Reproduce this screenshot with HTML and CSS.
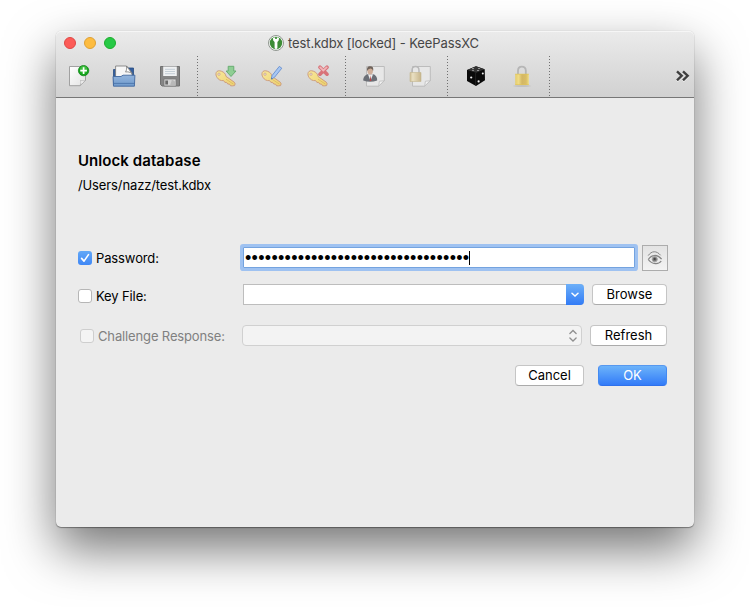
FILE: index.html
```html
<!DOCTYPE html>
<html lang="en">
<head>
<meta charset="utf-8">
<title>test.kdbx [locked] - KeePassXC</title>
<link rel="stylesheet" href="styles.css">
</head>
<body>
<svg width="0" height="0" class="defs">
  <defs>
    <linearGradient id="gold" x1="0" y1="0" x2="1" y2="1"><stop offset="0" stop-color="#f8e89a"/><stop offset="1" stop-color="#ecd070"/></linearGradient>
    <linearGradient id="paper" x1="0" y1="0" x2="1" y2="1"><stop offset="0" stop-color="#fff"/><stop offset="1" stop-color="#e2e2e2"/></linearGradient>
    <linearGradient id="folder" x1="0" y1="0" x2="0" y2="1"><stop offset="0" stop-color="#93b4dc"/><stop offset="1" stop-color="#6f9acc"/></linearGradient>
    <linearGradient id="brass" x1="0" y1="0" x2="1" y2="0"><stop offset="0" stop-color="#e5cd6c"/><stop offset=".25" stop-color="#f0dc86"/><stop offset=".5" stop-color="#d3b765"/><stop offset=".8" stop-color="#d9bd66"/><stop offset="1" stop-color="#efdc7d"/></linearGradient>
    <linearGradient id="pale" x1="0" y1="0" x2="1" y2="0"><stop offset="0" stop-color="#cfbf96"/><stop offset=".25" stop-color="#e9dfc2"/><stop offset="1" stop-color="#c7b58b"/></linearGradient>
    <g id="key">
      <path d="M1.2 7.6C2 5.6 4.2 5.4 6.4 6.2C9 7.2 10.6 8.6 11 11.4L19.3 17.2Q20.8 18.6 19.6 20.6Q17.4 21 15.6 20.8L14.4 19L12.8 19.1L11.6 17.4L9.9 17.4L8.6 15.6C5.6 16 3.4 14.6 2 12.4C1 10.8.6 9.2 1.2 7.6Z" fill="url(#gold)" stroke="#c9967a" stroke-width=".9"/>
      <circle cx="4" cy="9.2" r="1.2" fill="#e4dfd8" stroke="#c9967a" stroke-width=".6"/>
      <path d="M11 14.2L18.3 19" stroke="#d9b35c" stroke-width=".7"/>
    </g>
  </defs>
</svg>
<main class="window">
  <header class="chrome">
    <div class="titlebar">
      <div class="lights"><i class="light red"></i><i class="light yellow"></i><i class="light green"></i></div>
      <svg class="logo" width="16" height="16" viewBox="0 0 16 16"><circle cx="8" cy="8" r="7.5" fill="#fafafa" stroke="#858b85" stroke-width=".9"/><circle cx="8" cy="8" r="6.2" fill="#3c8c36"/><path d="M5 2.9L7.1 2.2L7.2 4H8.8L8.9 2.2L11 2.9L10.7 5.6L9.4 7V13.2L8 14.2L6.6 13.2V7L5.2 5.6Z" fill="#fff"/></svg>
      <span class="caption">test.kdbx [locked] - KeePassXC</span>
    </div>
    <nav class="toolbar">
      <div class="group first">
        <svg width="22" height="22" viewBox="0 0 22 22"><path d="M1.5 1.5H17.5V15.5L12 20.7H1.5Z" fill="url(#paper)" stroke="#999" stroke-width=".9"/><path d="M12 20.5C13.2 18.5 12.8 16.5 12.5 15.3C14 16 16 16 17.5 15.5Z" fill="#f9f9f9" stroke="#aaa" stroke-width=".7"/><circle cx="15.6" cy="5.6" r="5.2" fill="#15a51d" stroke="#087e10" stroke-width=".7"/><circle cx="15.6" cy="4.5" r="3.6" fill="#59cc54" opacity=".6"/><path d="M15.6 2.3V8.9M12.3 5.6H18.9" stroke="#fff" stroke-width="1.7"/></svg>
        <svg width="24" height="22" viewBox="0 0 24 22"><path d="M1.5 20V4.5H5L7 3H21.5V20Z" fill="#355f9e" stroke="#284d82" stroke-width=".8"/><path d="M3.6 1H14.5L20 8V13H3.6Z" fill="#f6f6f6" stroke="#777" stroke-width=".8"/><path d="M14.5 1C15 4 14.2 6 13.5 7C16 6.6 18 7 20 8.5Z" fill="#fff" stroke="#777" stroke-width=".8"/><path d="M1 11.5H9L11 10.2H22.9L22.4 21.2H1.5Z" fill="url(#folder)" stroke="#41689f" stroke-width=".9"/><path d="M1.7 18.4H22.2" stroke="#4974aa" stroke-width=".9"/></svg>
        <svg width="22" height="22" viewBox="0 0 22 22"><path d="M1.5 1.5H20.5V21H3L1.5 19.5Z" fill="#858585" stroke="#707070"/><path d="M4.2 1.5H17.8V11H4.2Z" fill="#eff1f2"/><path d="M6 4.3H16M6 6.5H16M6 8.7H16" stroke="#c0cbd3" stroke-width=".9"/><path d="M5 14H17V21H5Z" fill="#d2d2d2" stroke="#777" stroke-width=".7"/><path d="M6.3 15.5H9V19.5H6.3Z" fill="#686868"/><path d="M13 14.5L16.6 17V20.5H11Z" fill="#b8b8b8"/></svg>
      </div>
      <div class="group keys">
        <svg width="22" height="22" viewBox="0 0 22 22"><use href="#key"/><path d="M13.2 1.3H18.8V6H21L16 11.5L11.1 6H13.2Z" fill="#8fce94" stroke="#62a96c" stroke-width=".9"/></svg>
        <svg width="22" height="22" viewBox="0 0 22 22"><use href="#key"/><path d="M10.3 14.2L11 10.6L18.3 1.4L20.8 3.2L13.5 12.3Z" fill="#a7c7f3" stroke="#668fd0" stroke-width=".9"/><path d="M10.2 14.3L10.5 12.5L11.6 13.4Z" fill="#57698b"/></svg>
        <svg width="22" height="22" viewBox="0 0 22 22"><use href="#key"/><path d="M13 2.2L20 9.2M20 2.2L13 9.2" stroke="#d87379" stroke-width="3.6" stroke-linecap="round"/><path d="M13.2 2.4L16.3 5.4L19.7 2.4" fill="none" stroke="#f0b6ba" stroke-width="1.8" stroke-linecap="round"/></svg>
      </div>
      <div class="group entries">
        <svg width="22" height="22" viewBox="0 0 22 22"><path d="M3.5 1.5H21.3V15.8L15.7 21.2H3.5Z" fill="#e7e7e7" stroke="#bcbcbc"/><path d="M15.7 21L16.4 16.2L21.2 15.8Z" fill="#f2f2f2" stroke="#bcbcbc" stroke-width=".8"/><path d="M.2 15.5C.3 11.3 2.7 9.7 5.5 9H9.5C12.7 9.5 14.3 12 14.2 15.5Q7 18.2.2 15.5Z" fill="#6b6f76"/><path d="M5 9.3L7.5 16L10 9.3Z" fill="#eee"/><path d="M7.5 10.3L6.7 15.9H8.4Z" fill="#b94849"/><ellipse cx="7.2" cy="5.6" rx="2.8" ry="3.9" fill="#cfae99"/><path d="M4.2 6C3.7 2.5 4.7 1.3 7.3 1.3C10 1.3 10.7 3 10.1 6Q9.5 3.7 7.7 3.5Q5 3.4 4.2 6Z" fill="#6e625a"/></svg>
        <svg width="22" height="22" viewBox="0 0 22 22"><path d="M3.5 1.5H21.3V15.8L15.7 21.2H3.5Z" fill="#e7e7e7" stroke="#bcbcbc"/><path d="M15.7 21L16.4 16.2L21.2 15.8Z" fill="#f2f2f2" stroke="#bcbcbc" stroke-width=".8"/><path d="M3 8V5.5C3 .2 10 .2 10 5.5V8" fill="none" stroke="#b8b8b8" stroke-width="1.5"/><path d="M1 7.5H12V16.5H1Z" fill="url(#pale)" stroke="#c5b78f" stroke-width=".6"/></svg>
      </div>
      <div class="group tools">
        <svg width="22" height="22" viewBox="0 0 22 22"><path d="M11 1.2L19.7 4.2L20 15.2L11 21L2 16V5Z" fill="#0a0a0a"/><path d="M11 1.2L19.5 4.3L11.2 7.7L2.3 5Z" fill="#333"/><path d="M10.6 8V20.6" stroke="#2c2c2c" stroke-width=".7"/><g fill="#eee"><g opacity=".6"><ellipse cx="8" cy="3.6" rx="1.2" ry=".5"/><ellipse cx="14" cy="3.5" rx="1.2" ry=".5"/><ellipse cx="8" cy="5.3" rx="1.2" ry=".5"/><ellipse cx="13" cy="5.5" rx="1.2" ry=".5"/></g><circle cx="6.2" cy="12.5" r="1.1"/><circle cx="13.6" cy="16.4" r="1.1"/><circle cx="17.8" cy="8.6" r="1"/></g></svg>
        <svg width="22" height="22" viewBox="0 0 22 22"><ellipse cx="11" cy="21" rx="9" ry=".8" fill="#aaa" opacity=".6"/><path d="M7 10V5.5C7 .2 14.8 .2 14.8 5.5V10" fill="none" stroke="#b6b6b6" stroke-width="1.8"/><path d="M4.2 9H17.8V20H4.2Z" fill="url(#brass)"/><path d="M4.2 9.2H17.8M4.2 19.6H17.8" stroke="#e0c35a" stroke-width=".7"/></svg>
      </div>
      <svg class="more" width="14" height="12" viewBox="0 0 14 12"><path d="M1 1.3L5.7 5.8L1 10.3M7 1.3L11.7 5.8L7 10.3" fill="none" stroke="#fff" stroke-width="2" transform="translate(0 1)"/><path d="M1 1.3L5.7 5.8L1 10.3M7 1.3L11.7 5.8L7 10.3" fill="none" stroke="#3f3f3f" stroke-width="2.4"/></svg>
    </nav>
  </header>
  <section class="content">
    <h1>Unlock database</h1>
    <p class="path">/Users/nazz/test.kdbx</p>
    <form class="form">
      <div class="row password">
        <label><span class="check on"><svg width="14" height="14" viewBox="0 0 14 14"><path d="M3.6 7.4L6 10.1L10.5 3.6" fill="none" stroke="#fff" stroke-width="1.6" stroke-linecap="round" stroke-linejoin="round"/></svg></span>Password:</label>
        <div class="secret"><span class="dots">••••••••••••••••••••••••••••••••••</span><i class="caret"></i></div>
        <span class="eye"><svg width="16" height="16" viewBox="0 0 16 16" fill="none" stroke="#858585"><path d="M1.2 5.6C4.5.6 9.7.5 13.6 5.3" stroke-width="1"/><path d="M1.3 9.5C4.6 4.2 10.5 4.3 14.6 9.2" stroke-width="1.3"/><path d="M1.3 9.5C5 14.8 12 14.4 14.2 11" stroke-width="1.3"/><circle cx="7.7" cy="9.2" r="2.6" fill="#777" stroke="#aaa"/><circle cx="7.7" cy="9" r="1.1" fill="#444" stroke="none"/></svg></span>
      </div>
      <div class="row keyfile">
        <label><span class="check"></span>Key File:</label>
        <div class="combo"><span class="drop"><svg width="8" height="6" viewBox="0 0 8 6"><path d="M1 1.3L4 4L7 1.3" fill="none" stroke="#fff" stroke-width="1.5" stroke-linecap="round"/></svg></span></div>
        <span class="button">Browse</span>
      </div>
      <div class="row challenge">
        <label><span class="check"></span>Challenge Response:</label>
        <div class="select"><svg width="8" height="14" viewBox="0 0 8 14"><path d="M.9 4.5L4 1.5L7.1 4.5M.9 9L4 12L7.1 9" fill="none" stroke="#909090" stroke-width="1.3" stroke-linecap="round"/></svg></div>
        <span class="button">Refresh</span>
      </div>
      <div class="row actions"><span class="button">Cancel</span><span class="button primary">OK</span></div>
    </form>
  </section>
</main>
</body>
</html>
```
FILE: styles.css
```css
* { box-sizing: border-box; }
body {
  margin: 0;
  height: 607px;
  overflow: hidden;
  padding: 31px 56px 80px;
  background: #fff;
  color: #000;
  font: 13px/16px Inter, "Liberation Sans", sans-serif;
  letter-spacing: -0.12px;
}
svg { display: block; flex: none; }
.defs { position: absolute; }
.window {
  width: 638px;
  height: 496px;
  border-radius: 5px;
  background: #ebebeb;
  box-shadow: 0 1px 1px rgba(0,0,0,.35), 0 0 1px rgba(0,0,0,.25), 0 22px 50px rgba(0,0,0,.55);
}
.chrome {
  height: 67px;
  border-radius: 5px 5px 0 0;
  border-bottom: 1px solid #767676;
  background: linear-gradient(#ebebeb, #d1d1d1);
  box-shadow: inset 0 1px #f6f6f6;
}
.titlebar { height: 24px; display: flex; align-items: center; }
.lights { display: flex; gap: 8px; padding-left: 8px; width: 212px; }
.light { width: 12px; height: 12px; border-radius: 50%; border: 1px solid; }
.red { background: #fc5b57; border-color: #df4744; }
.yellow { background: #fdbc40; border-color: #dea034; }
.green { background: #27c946; border-color: #1dad2c; }
.caption { margin-left: 4px; color: #464646; letter-spacing: -.1px; white-space: nowrap; }
.toolbar { height: 42px; display: flex; align-items: center; }
.group {
  height: 41px;
  display: flex;
  align-items: center;
  gap: 24px;
  background: repeating-linear-gradient(#707070 0 1px, transparent 1px 3px) right top / 1px 100% no-repeat;
}
.first { width: 142px; padding-left: 12px; gap: 22px; }
.first svg:last-child { margin-left: 1px; }
.keys { width: 148px; padding-left: 17px; }
.entries { width: 102px; padding-left: 17px; }
.tools { width: 102px; padding-left: 17px; }
.more { margin-left: auto; margin-right: 4px; }
.content { padding: 54px 27px 0 22px; }
h1 { margin: 0; font-size: 15px; line-height: 18px; font-weight: 600; letter-spacing: .07px; }
.path { margin: 7px 0 0; }
.form { margin-top: 50px; }
.row { display: flex; align-items: center; }
.password { height: 29px; margin-right: -1px; }
label { display: flex; align-items: center; gap: 4px; white-space: nowrap; }
.check { width: 14px; height: 14px; border: 1px solid #b6b6b6; border-radius: 3px; background: #fff; }
.on { border: 0; background: linear-gradient(#62a8f7, #3f87f5); }
.password label, .keyfile label { width: 165px; }
.password label { padding-top: 1px; }
.keyfile label { padding-top: 3px; }
.secret {
  width: 392px;
  height: 21px;
  display: flex;
  align-items: center;
  padding-left: 1px;
  border: 1px solid #74a3df;
  background: #fff;
  box-shadow: 0 0 0 3px #9fc2f1;
  border-radius: 1px;
}
.dots { font: 18px/20px "Liberation Sans", sans-serif; letter-spacing: .3px; white-space: nowrap; }
.caret { width: 1px; height: 14px; background: #000; }
.eye { margin: 1px 0 0 auto; width: 26px; height: 26px; display: grid; place-items: center; border: 1px solid #acacac; background: linear-gradient(#e3e3e3, #f3f3f3); }
.keyfile { height: 21px; margin-top: 12px; }
.combo { width: 341px; height: 21px; display: flex; justify-content: flex-end; border: 1px solid #bdbdbd; border-right: 0; border-radius: 0 4px 4px 0; background: #fff; }
.drop { width: 18px; margin: -1px 0; display: grid; place-items: center; border-radius: 0 4px 4px 0; background: linear-gradient(#6db0f8, #327bf6); }
.button { width: 75px; height: 21px; margin-left: auto; border: 1px solid #c5c5c5; border-bottom-color: #ababab; border-radius: 4px; background: #fff; line-height: 19px; text-align: center; letter-spacing: 0; }
.challenge { height: 21px; margin-top: 20px; }
.challenge label { width: 164px; padding-left: 2px; color: #808080; letter-spacing: -.14px; }
.challenge .check { background: #f4f4f4; border-color: #cecece; }
.challenge .button { width: 77px; }
.select { width: 340px; height: 21px; display: flex; align-items: center; justify-content: flex-end; padding-right: 4px; border: 1px solid #d0d0d0; border-radius: 4px; background: #f3f3f3; }
.actions { margin-top: 19px; justify-content: flex-end; gap: 14px; }
.actions .button { width: 69px; margin-left: 0; }
.actions .primary { border-color: #5798ef #438af2 #2e70eb; background: linear-gradient(#6cb3fa, #327bf8); color: #fff; }
```
